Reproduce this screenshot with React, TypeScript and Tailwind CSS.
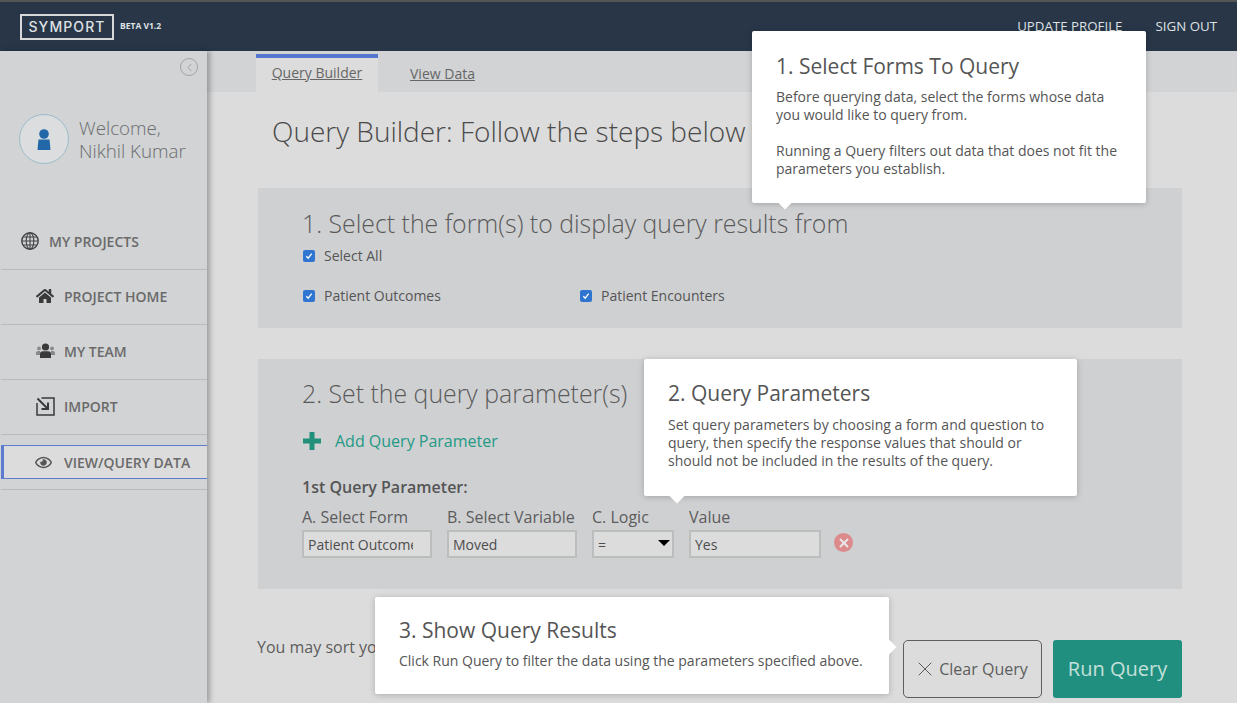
import React from "react";
import { FaHome, FaRegEye } from "react-icons/fa";
import { X, ChevronLeft } from "lucide-react";

const font = "font-['Open_Sans',sans-serif]";

function Check({ label }: { label: string }) {
  return (
    <div className="flex items-center pl-px">
      <span className="w-[12px] h-[12px] rounded-[2px] bg-[#2f74d0] flex items-center justify-center mr-[9px]">
        <svg width="8" height="8" viewBox="0 0 8 8"><path d="M1.3 4.2 L3.2 6.2 L6.7 1.6" fill="none" stroke="#fff" strokeWidth="1.3" /></svg>
      </span>
      <span className="text-[14px] leading-[18px] text-[#555]">{label}</span>
    </div>
  );
}

function GlobeIcon() {
  return (
    <svg width="18" height="18" viewBox="0 0 18 18" fill="none" stroke="#444" strokeWidth="1.1">
      <circle cx="9" cy="9" r="8.2" strokeWidth="1.4" />
      <ellipse cx="9" cy="9" rx="3.8" ry="8.2" />
      <path d="M9 1 V17 M1 9 H17 M2 5 H16 M2 13 H16" />
    </svg>
  );
}

function TeamIcon() {
  return (
    <svg width="19" height="16" viewBox="0 0 19 16" fill="#3a3a3a">
      <circle cx="3" cy="5.4" r="1.9" fill="#888" />
      <circle cx="16" cy="5.4" r="1.9" fill="#888" />
      <path d="M0 12 V10 Q0 8 2.2 8 H4 V12 Z M19 12 V10 Q19 8 16.8 8 H15 V12 Z" fill="#888" />
      <circle cx="9.5" cy="4" r="3.6" />
      <path d="M4 15 V11 Q4 8.2 7 8.2 H12 Q15 8.2 15 11 V15 Z" />
    </svg>
  );
}

function ImportIcon() {
  return (
    <svg width="19" height="19" viewBox="0 0 19 19" fill="none" stroke="#3a3a3a" strokeWidth="1.5">
      <path d="M5.5 1 H18 V18 H1 V6" />
      <path d="M1.5 1.5 L11.5 11.5 M12 5.5 V12 H5.5" strokeWidth="2" />
    </svg>
  );
}

function NavItem({ icon, label, indent }: { icon: React.ReactNode; label: string; indent: string }) {
  return (
    <div className={`h-[55px] border-b border-[#b9babc] ml-px flex items-center pb-[2px] ${indent}`}>
      <span className="w-[28px] flex items-center">{icon}</span>
      <span className="text-[14px] font-semibold text-[#6a6a6a]">{label}</span>
    </div>
  );
}

function Field({ label, value, w }: { label: string; value: string; w: string }) {
  return (
    <div className={`flex flex-col ${w}`}>
      <span className="text-[16px] leading-[22px] text-[#5c5c5c] whitespace-nowrap">{label}</span>
      <div className="mt-[2px] h-[28px] border-2 border-[#bcbdbd] bg-[#dcdcdc] pl-[4px] text-[14px] leading-[25px] text-[#4d4d4d] whitespace-nowrap">
        <div className="overflow-hidden max-w-[105px]">{value}</div>
      </div>
    </div>
  );
}

function Tip({ title, className, arrow, bodyClass, children }: { title: string; className: string; arrow: string; bodyClass: string; children: React.ReactNode }) {
  return (
    <div className={`absolute bg-white rounded-[2px] shadow-[0_1px_6px_rgba(0,0,0,0.22)] ${className}`}>
      <div className="text-[21px] leading-[28px] text-[#555]">{title}</div>
      <div className={`text-[14px] leading-[18px] text-[#555] ${bodyClass}`}>{children}</div>
      <span className={`absolute w-[12px] h-[12px] bg-white rotate-45 ${arrow}`} />
    </div>
  );
}

export default function App() {
  return (
    <div className={`relative w-[1237px] h-[703px] overflow-hidden bg-[#dcdcdc] flex flex-col ${font}`}>
      <header className="h-[51px] shrink-0 bg-[#283648] border-t-2 border-[#555] flex items-center pl-[20px] pr-[20px] text-[#dfe1e4]">
        <div className="w-[94px] h-[26px] border-2 border-[#d6d8da] flex items-center justify-center font-['Inter',sans-serif] text-[14px] font-medium tracking-[1.1px]">SYMPORT</div>
        <span className="ml-[6px] text-[8.5px] font-bold">BETA V1.2</span>
        <span className="ml-auto text-[13.3px] mt-[1px]">UPDATE PROFILE</span>
        <span className="ml-[33px] text-[13.3px] mt-[1px]">SIGN OUT</span>
      </header>
      <div className="flex-1 flex min-h-0">
        <aside className="relative w-[207px] shrink-0 bg-[#d1d3d5] shadow-[3px_0_5px_rgba(0,0,0,0.28)] z-10 flex flex-col">
          <div className="flex justify-end pt-[7px] pr-[9px]">
            <span className="w-[18px] h-[18px] rounded-full border border-[#a2a4a6] flex items-center justify-center text-[#909294]">
              <ChevronLeft size={13} strokeWidth={1.4} />
            </span>
          </div>
          <div className="flex items-center pl-[19px] mt-[38px]">
            <span className="w-[50px] h-[50px] rounded-full border border-[#9dbccb] bg-[#dbdddf] flex items-center justify-center">
              <svg width="14" height="21" viewBox="0 0 14 21" fill="#2268a8"><circle cx="7" cy="5" r="4.8" /><path d="M1.5 10.5 H12.5 Q13 15 13.5 21 H0.5 Q1 15 1.5 10.5 Z" /></svg>
            </span>
            <div className="ml-[10px] text-[18.7px] leading-[23px] font-light text-[#6b6d6f]">Welcome,<br />Nikhil Kumar</div>
          </div>
          <div className="mt-[51px]">
            <NavItem indent="pl-[20px]" label="MY PROJECTS" icon={<GlobeIcon />} />
            <NavItem indent="pl-[35px]" label="PROJECT HOME" icon={<FaHome size={18} color="#3a3a3a" />} />
            <NavItem indent="pl-[35px]" label="MY TEAM" icon={<TeamIcon />} />
            <NavItem indent="pl-[35px]" label="IMPORT" icon={<ImportIcon />} />
            <div className="h-[55px] border-b border-[#b9babc] ml-px pt-[10px]">
              <div className="h-[34px] bg-[#dcdcdc] border-y border-[#5b7ccf] border-l-[3px] border-l-[#5b7ccf] flex items-center pl-[31px]">
                <span className="w-[29px]"><FaRegEye size={17} color="#555" /></span>
                <span className="text-[14px] font-semibold text-[#6a6a6a]">VIEW/QUERY DATA</span>
              </div>
            </div>
          </div>
        </aside>
        <main className="flex-1 min-w-0 flex flex-col">
          <nav className="h-[41px] shrink-0 bg-[#d1d3d5] flex pl-[49px]">
            <div className="w-[122px] mt-[3px] border-t-4 border-[#5478cf] bg-[#dcdcdc] flex justify-center pt-[4px] text-[14px] text-[#666] underline">Query Builder</div>
            <div className="ml-[32px] pt-[12px] text-[14px] text-[#666] underline">View Data</div>
          </nav>
          <div className="pl-[51px] pr-[55px] flex-1 flex flex-col">
            <h1 className="pl-[14px] mt-[19px] text-[28px] leading-[40px] font-light text-[#4a4a4a] whitespace-nowrap">Query Builder: Follow the steps below t</h1>
            <section className="mt-[37px] h-[140px] bg-[#cfd0d2] pl-[44px] pt-[18px]">
              <h2 className="text-[24.85px] leading-[34px] font-light text-[#5a5a5a]">1. Select the form(s) to display query results from</h2>
              <div className="mt-[7px]"><Check label="Select All" /></div>
              <div className="mt-[22px] flex">
                <div className="w-[277px]"><Check label="Patient Outcomes" /></div>
                <Check label="Patient Encounters" />
              </div>
            </section>
            <section className="mt-[31px] h-[230px] bg-[#cfd0d2] pl-[44px] pt-[17px]">
              <h2 className="text-[24.85px] leading-[34px] font-light text-[#5a5a5a]">2. Set the query parameter(s)</h2>
              <div className="mt-[19px] pl-px flex items-center text-[#229a86]">
                <svg width="18" height="18" viewBox="0 0 18 18" fill="#23907c"><path d="M6.5 0 H11.5 V6.5 H18 V11.5 H11.5 V18 H6.5 V11.5 H0 V6.5 H6.5 Z" /></svg>
                <span className="ml-[14px] text-[16px] leading-[24px]">Add Query Parameter</span>
              </div>
              <div className="mt-[24px] text-[16px] leading-[20px] font-semibold text-[#555] whitespace-nowrap">1st Query Parameter:</div>
              <div className="mt-[9px] flex">
                <Field label="A. Select Form" value="Patient Outcomes" w="w-[130px]" />
                <Field label="B. Select Variable" value="Moved" w="w-[130px] ml-[15px]" />
                <div className="w-[82px] ml-[15px] flex flex-col">
                  <span className="text-[16px] leading-[22px] text-[#5c5c5c]">C. Logic</span>
                  <div className="mt-[2px] h-[28px] border-2 border-[#bcbdbd] bg-[#dcdcdc] pl-[4px] pr-[2px] flex items-center justify-between text-[14px] text-[#4d4d4d]">
                    <span>=</span>
                    <span className="w-0 h-0 border-x-[6px] border-x-transparent border-t-[6px] border-t-black -mt-[3px]" />
                  </div>
                </div>
                <Field label="Value" value="Yes" w="w-[132px] ml-[15px]" />
                <span className="ml-[13px] mt-[27px] w-[19px] h-[19px] rounded-full bg-[#dc8a8c] flex items-center justify-center">
                  <X size={14} strokeWidth={3.2} color="#e8e8e8" />
                </span>
              </div>
            </section>
            <div className="mt-[51px] flex h-[58px] -ml-px">
              <span className="-mt-[5px] leading-[24px] text-[16px] text-[#5c5c5c] whitespace-nowrap">You may sort yo</span>
              <div className="ml-auto w-[139px] h-[58px] border border-[#5e5e5e] rounded-[5px] flex items-center justify-center text-[16px] text-[#5c5c5c]">
                <X size={24} strokeWidth={1} className="mr-[2px] -ml-[4px]" />Clear Query
              </div>
              <div className="ml-[11px] w-[129px] h-[58px] rounded-[3px] bg-[#218f80] flex items-center justify-center text-[20px] text-[#c4e0da]">Run Query</div>
            </div>
          </div>
        </main>
      </div>

      <Tip title="1. Select Forms To Query" bodyClass="mt-[8px]" className="left-[752px] top-[31px] w-[394px] h-[172px] pl-[24px] pr-[20px] pt-[21px]" arrow="left-[27px] -bottom-[4px]">
        Before querying data, select the forms whose data you would like to query from.
        <br /><br />
        Running a Query filters out data that does not fit the parameters you establish.
      </Tip>
      <Tip title="2. Query Parameters" bodyClass="mt-[9px]" className="left-[644px] top-[359px] w-[433px] h-[137px] pl-[24px] pr-[24px] pt-[20px]" arrow="left-[27px] -bottom-[5px]">
        Set query parameters by choosing a form and question to query, then specify the response values that should or should not be included in the results of the query.
      </Tip>
      <Tip title="3. Show Query Results" bodyClass="mt-[8px]" className="left-[375px] top-[597px] w-[514px] h-[97px] pl-[24px] pr-[20px] pt-[19px]" arrow="-right-[5px] top-[44px]">
        Click Run Query to filter the data using the parameters specified above.
      </Tip>
    </div>
  );
}
